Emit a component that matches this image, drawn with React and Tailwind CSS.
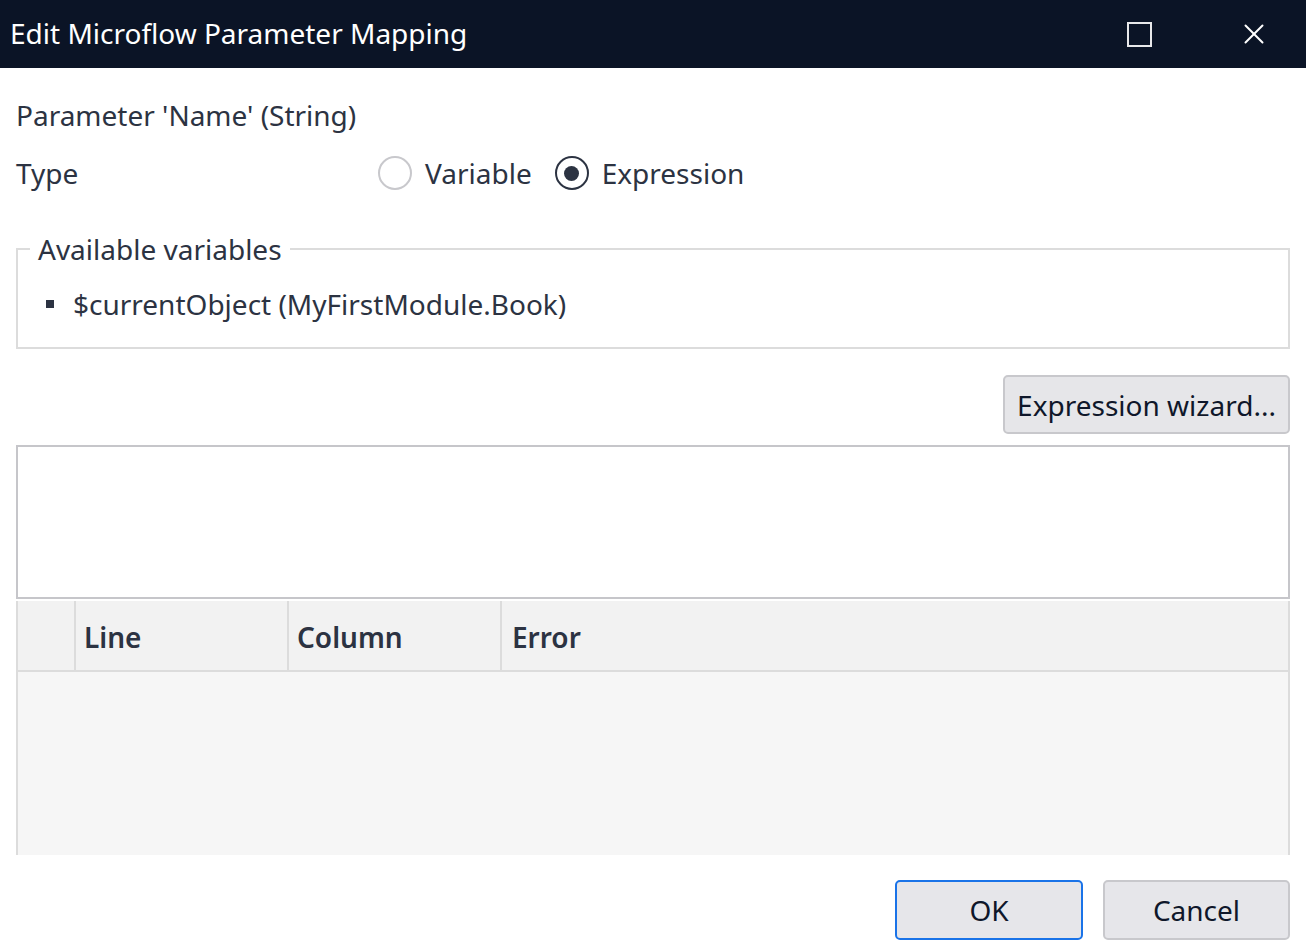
import { X } from "lucide-react";

const FONT = "font-['Noto_Sans','Open_Sans',sans-serif]";

function Radio({ checked, label }) {
  return (
    <label className="flex items-center gap-[13px]">
      <span
        className={`w-[34px] h-[34px] rounded-full border-2 flex items-center justify-center ${checked ? "border-[#2c3342]" : "border-[#c8c8cc]"}`}
      >
        {checked && <span className="w-[15px] h-[15px] rounded-full bg-[#2c3342]" />}
      </span>
      <span>{label}</span>
    </label>
  );
}

export default function App() {
  return (
    <div className={`w-[1306px] h-[951px] bg-white overflow-hidden flex flex-col text-[#2c3342] text-[28px] ${FONT}`}>
      {/* Title bar */}
      <div className="h-[68px] shrink-0 bg-[#0b1426] flex items-center justify-between pl-[10px]">
        <span className="text-white text-[28px] leading-none -mt-[2px]">Edit Microflow Parameter Mapping</span>
        <div className="flex items-center h-full">
          <div className="w-[125px] h-full flex items-center justify-center">
            <span className="block w-[25px] h-[25px] border-2 border-[#e8e8ea]" />
          </div>
          <div className="w-[104px] h-full flex items-center justify-center">
            <X className="w-[34px] h-[34px] text-white" strokeWidth={1.4} />
          </div>
        </div>
      </div>

      <div className="flex-1 flex flex-col px-[16px]">
        <div className="h-[40px] mt-[27px] flex items-center">Parameter 'Name' (String)</div>

        <div className="h-[40px] mt-[18px] flex items-center">
          <span className="w-[362px]">Type</span>
          <div className="flex items-center gap-[23px]">
            <Radio label="Variable" />
            <Radio checked label="Expression" />
          </div>
        </div>

        {/* Available variables */}
        <fieldset className="mt-[36px] h-[120px] border-2 border-[#dcdcdc]">
          <legend className="ml-[12px] px-[8px] leading-[40px]">Available variables</legend>
          <div className="flex items-center h-[40px] mt-[15px] pl-[28px]">
            <span className="w-[8px] h-[8px] bg-[#2c3342] mr-[19px]" />
            <span>$currentObject (MyFirstModule.Book)</span>
          </div>
        </fieldset>

        <div className="flex justify-end mt-[26px]">
          <button className="w-[287px] h-[59px] bg-[#e6e6e9] border-2 border-[#c8c8cc] rounded-[5px] text-[#0f172a]">
            Expression wizard...
          </button>
        </div>

        {/* Expression editor */}
        <div className="mt-[11px] h-[154px] border-2 border-[#c6c6ca] bg-white" />

        {/* Error table */}
        <div className="mt-[2px] flex-1 flex flex-col border-x-2 border-[#dcdcdc] bg-[#f6f6f6]">
          <div className="h-[71px] flex bg-[#f2f2f2] border-b-2 border-[#dcdcdc] font-semibold">
            <div className="w-[58px] border-r-2 border-[#dcdcdc]" />
            <div className="w-[213px] border-r-2 border-[#dcdcdc] flex items-center pl-[8px] pt-[3px]">Line</div>
            <div className="w-[213px] border-r-2 border-[#dcdcdc] flex items-center pl-[8px] pt-[3px]">Column</div>
            <div className="flex-1 flex items-center pl-[10px] pt-[3px]">Error</div>
          </div>
          <div className="flex-1" />
        </div>

        {/* Footer */}
        <div className="h-[96px] shrink-0 flex items-start justify-end gap-[20px] pt-[25px]">
          <button className="w-[188px] h-[60px] bg-[#e6e6ea] border-2 border-[#1a73e8] rounded-[5px] text-[#0f172a]">
            OK
          </button>
          <button className="w-[187px] h-[60px] bg-[#e6e6ea] border-2 border-[#c8c8cc] rounded-[5px] text-[#0f172a]">
            Cancel
          </button>
        </div>
      </div>
    </div>
  );
}
